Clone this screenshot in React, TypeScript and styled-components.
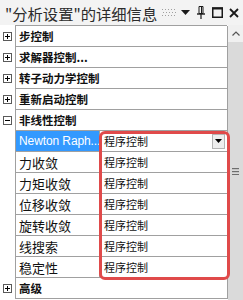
import React from "react";
import styled, { createGlobalStyle } from "styled-components";

const Global = createGlobalStyle`
  html, body { margin: 0; padding: 0; background: #ffffff; }
  body { font-family: "Noto Sans CJK SC", "Noto Sans", sans-serif; }
`;

const Panel = styled.div`
  width: 243px;
  height: 300px;
  overflow: hidden;
  display: flex;
  flex-direction: column;
  background: #ffffff;
`;

const TitleBar = styled.div`
  height: 25px;
  flex: none;
  display: flex;
  align-items: center;
  padding-left: 5px;
  background: #f3f3f3;
  color: #2b2b2b;
  font-size: 15.3px;
  white-space: nowrap;
`;

const TitleText = styled.span`
  flex: none;
`;

const TitleTools = styled.div`
  display: flex;
  align-items: center;
  margin-left: 4px;
`;

const ToolIcon = styled.svg<{ $ml?: number }>`
  display: block;
  flex: none;
  margin-left: ${(p) => p.$ml ?? 0}px;
`;

const Body = styled.div`
  flex: 1;
  display: flex;
  position: relative;
`;

const Grid = styled.div`
  width: 228px;
  flex: none;
  display: flex;
  flex-direction: column;
`;

const TopEdge = styled.div`
  height: 1px;
  margin-left: 15px;
  width: 212px;
  background: #a0a0a0;
`;

const Row = styled.div`
  display: grid;
  grid-template-columns: 15px 1fr;
  height: 21px;
`;

const Gutter = styled.div`
  display: flex;
  align-items: center;
  justify-content: center;
  padding-right: 1px;
  background: #ffffff;
`;

const Cell = styled.div`
  border-left: 1px solid #a0a0a0;
  border-right: 1px solid #a0a0a0;
  border-bottom: 1px solid #a0a0a0;
  display: flex;
  align-items: stretch;
  min-width: 0;
`;

const CategoryLabel = styled.div`
  display: flex;
  align-items: center;
  padding-left: 3px;
  font-size: 11.5px;
  font-weight: 700;
  color: #111111;
`;

const NameCell = styled.div<{ $selected?: boolean }>`
  width: 83px;
  flex: none;
  display: flex;
  align-items: center;
  padding-left: 3px;
  box-sizing: border-box;
  background: ${(p) => (p.$selected ? "#3399ff" : "#ffffff")};
  color: ${(p) => (p.$selected ? "#ffffff" : "#111111")};
  font-size: 13px;
  white-space: nowrap;
  overflow: hidden;
`;

const LatinName = styled.span`
  font-family: "Liberation Sans", "Noto Sans", sans-serif;
  font-size: 12px;
  letter-spacing: -0.1px;
`;

const ValueCell = styled.div`
  flex: 1;
  display: flex;
  align-items: center;
  padding-left: 4px;
  border-left: 1px solid #a0a0a0;
  font-size: 11px;
  color: #111111;
  min-width: 0;
`;

const ValueText = styled.span`
  flex: 1;
`;

const DropButton = styled.div`
  width: 13px;
  height: 15px;
  margin-right: 2px;
  box-sizing: border-box;
  border: 1px solid #b4b4b4;
  background: #eeeeee;
  display: flex;
  align-items: center;
  justify-content: center;
`;

const PlusBox = styled.div<{ $open?: boolean }>`
  width: 9px;
  height: 9px;
  box-sizing: border-box;
  border: 1px solid #5a5a5a;
  position: relative;
  background: #ffffff;
  &::before {
    content: "";
    position: absolute;
    left: 1px;
    right: 1px;
    top: 3px;
    height: 1px;
    background: #000000;
  }
  &::after {
    content: "";
    position: absolute;
    top: 1px;
    bottom: 1px;
    left: 3px;
    width: 1px;
    background: #000000;
    display: ${(p) => (p.$open ? "none" : "block")};
  }
`;

const ScrollBar = styled.div`
  flex: 1;
  display: flex;
  flex-direction: column;
  background: #dcdcdc;
`;

const ScrollUp = styled.div`
  height: 17px;
  flex: none;
  background: #f0f0f0;
  display: flex;
  align-items: center;
  justify-content: center;
`;

const ScrollThumb = styled.div`
  flex: 1;
  display: flex;
  align-items: flex-start;
  justify-content: center;
  padding-top: 126px;
  background: #dadada;
`;

const Highlight = styled.div`
  position: absolute;
  left: 99px;
  top: 106px;
  width: 131px;
  height: 149px;
  box-sizing: border-box;
  border: 3px solid #e04a4a;
  border-radius: 6px;
  pointer-events: none;
`;

const categoriesTop = ["步控制", "求解器控制...", "转子动力学控制", "重新启动控制"];
const props = ["力收敛", "力矩收敛", "位移收敛", "旋转收敛", "线搜索", "稳定性"];

export default function App() {
  return (
    <>
      <Global />
      <Panel>
        <TitleBar>
          <TitleText>"分析设置"的详细信息</TitleText>
          <TitleTools>
            <ToolIcon width="16" height="10" viewBox="0 0 16 10">
              {[0, 1, 2, 3, 4].map((c) =>
                [0, 1, 2].map((r) => (
                  <rect key={`${c}-${r}`} x={1 + c * 3 + (r % 2)} y={1 + r * 3} width="1" height="1" fill="#a0a0a0" />
                ))
              )}
            </ToolIcon>
            <ToolIcon width="9" height="6" viewBox="0 0 9 6" $ml={4}>
              <path d="M0 0 H9 L4.5 5 Z" fill="#1a1a1a" />
            </ToolIcon>
            <ToolIcon width="10" height="13" viewBox="0 0 10 13" $ml={6}>
              <path d="M3 0.5 H7 V7.5 H3 Z" fill="none" stroke="#1a1a1a" strokeWidth="1" />
              <path d="M5.5 1 V7.5" stroke="#1a1a1a" strokeWidth="1" />
              <path d="M1 8 H9" stroke="#1a1a1a" strokeWidth="1.4" />
              <path d="M5 8 V13" stroke="#1a1a1a" strokeWidth="1.2" />
            </ToolIcon>
            <ToolIcon width="11" height="11" viewBox="0 0 11 11" $ml={6}>
              <rect x="0.75" y="1" width="9.5" height="9.25" fill="none" stroke="#1a1a1a" strokeWidth="1.5" />
              <rect x="0" y="0.5" width="11" height="2" fill="#1a1a1a" />
            </ToolIcon>
            <ToolIcon width="10" height="10" viewBox="0 0 10 10" $ml={6}>
              <path d="M1 1 L9 9 M9 1 L1 9" stroke="#1a1a1a" strokeWidth="1.8" />
            </ToolIcon>
          </TitleTools>
        </TitleBar>
        <Body>
          <Grid>
            <TopEdge />
            {categoriesTop.map((c) => (
              <Row key={c}>
                <Gutter>
                  <PlusBox />
                </Gutter>
                <Cell>
                  <CategoryLabel>{c}</CategoryLabel>
                </Cell>
              </Row>
            ))}
            <Row>
              <Gutter>
                <PlusBox $open />
              </Gutter>
              <Cell>
                <CategoryLabel>非线性控制</CategoryLabel>
              </Cell>
            </Row>
            <Row>
              <Gutter />
              <Cell>
                <NameCell $selected>
                  <LatinName>Newton Raph...</LatinName>
                </NameCell>
                <ValueCell>
                  <ValueText>程序控制</ValueText>
                  <DropButton>
                    <svg width="7" height="4" viewBox="0 0 7 4">
                      <path d="M0 0 H7 L3.5 4 Z" fill="#000000" />
                    </svg>
                  </DropButton>
                </ValueCell>
              </Cell>
            </Row>
            {props.map((p) => (
              <Row key={p}>
                <Gutter />
                <Cell>
                  <NameCell>{p}</NameCell>
                  <ValueCell>
                    <ValueText>程序控制</ValueText>
                  </ValueCell>
                </Cell>
              </Row>
            ))}
            <Row>
              <Gutter>
                <PlusBox />
              </Gutter>
              <Cell>
                <CategoryLabel>高级</CategoryLabel>
              </Cell>
            </Row>
          </Grid>
          <ScrollBar>
            <ScrollUp>
              <svg width="8" height="5" viewBox="0 0 8 5">
                <path d="M0.5 4.5 L4 1 L7.5 4.5" fill="none" stroke="#555555" strokeWidth="1.2" />
              </svg>
            </ScrollUp>
            <ScrollThumb>
              <svg width="7" height="7" viewBox="0 0 7 7">
                <rect x="0" y="0" width="7" height="1.2" fill="#6e6e6e" />
                <rect x="0" y="3" width="7" height="1.2" fill="#6e6e6e" />
                <rect x="0" y="6" width="7" height="1.2" fill="#6e6e6e" />
              </svg>
            </ScrollThumb>
          </ScrollBar>
          <Highlight />
        </Body>
      </Panel>
    </>
  );
}
